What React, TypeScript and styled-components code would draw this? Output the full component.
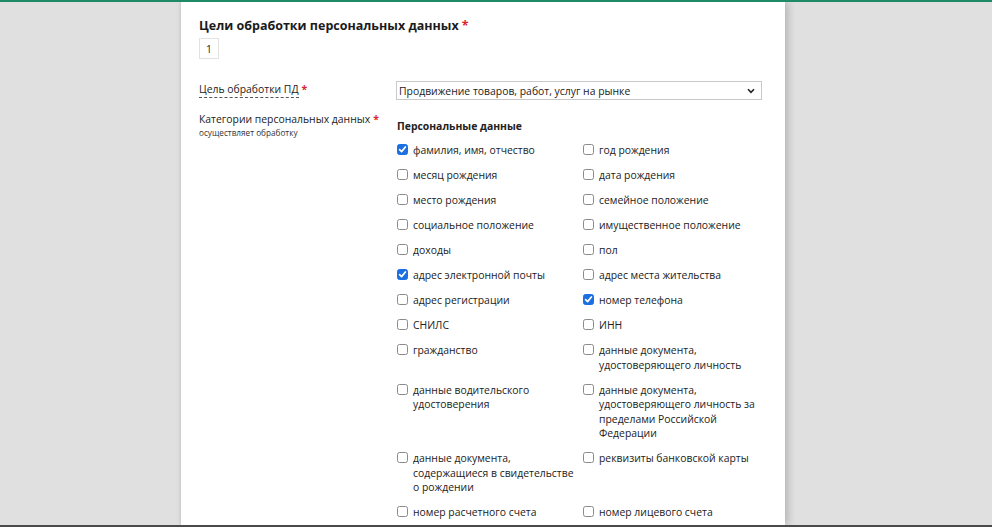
import React from "react";
import styled, { createGlobalStyle } from "styled-components";

const Global = createGlobalStyle`
  html, body { margin: 0; padding: 0; height: 100%; overflow: hidden; }
  body { background: #e0e0e0; font-family: "Open Sans", "Noto Sans", sans-serif; color: #222; }
  #root { height: 100%; }
`;

const Page = styled.div`
  height: 527px;
  display: flex;
  flex-direction: column;
  overflow: hidden;
  background: #e0e0e0;
`;

const TopLine = styled.div`
  height: 2px;
  flex: none;
  background: #1f8a68;
`;

const Stage = styled.div`
  flex: 1;
  min-height: 0;
  display: flex;
  padding-left: 181px;
  overflow: hidden;
`;

const Panel = styled.div`
  width: 604px;
  flex: none;
  background: #fff;
  box-shadow: 3px 0 8px rgba(0, 0, 0, 0.2), -1px 0 2px rgba(0, 0, 0, 0.06);
  padding: 14px 22px 0 18px;
  box-sizing: border-box;
`;

const BottomLine = styled.div`
  height: 2px;
  flex: none;
  background: #4a4a4a;
`;

const Title = styled.h2`
  margin: 0;
  font-size: 12.5px;
  font-weight: 700;
  line-height: 19px;
  color: #1b1b1b;
`;

const Req = styled.span`
  color: #d8262c;
  font-weight: 700;
  margin-left: 3px;
`;

const Counter = styled.div`
  margin-top: 3px;
  width: 20px;
  height: 21px;
  box-sizing: border-box;
  border: 1px solid #e2e2e2;
  font-size: 10.4px;
  display: flex;
  align-items: center;
  justify-content: center;
`;

const FieldRow = styled.div<{ $top: number }>`
  display: grid;
  grid-template-columns: 197px 366px;
  margin-top: ${(p) => p.$top}px;
  align-items: start;
`;

const LabelBox = styled.div`
  font-size: 10.4px;
  line-height: 15px;
  color: #222;
`;

const Dashed = styled.span`
  border-bottom: 1px dashed #555;
  padding-bottom: 1px;
`;

const Sub = styled.div`
  font-size: 8.2px;
  line-height: 11px;
  color: #333;
`;

const SelectBox = styled.div`
  height: 19px;
  box-sizing: border-box;
  border: 1px solid #c9c9c9;
  display: flex;
  align-items: center;
  justify-content: space-between;
  padding: 0 6px 0 2px;
  font-size: 10.4px;
  color: #1b1b1b;
`;

const Group = styled.div`
  padding-left: 1px;
`;

const GroupTitle = styled.div`
  font-size: 10.4px;
  font-weight: 700;
  line-height: 15px;
  margin-top: 7px;
`;

const Grid = styled.div`
  display: grid;
  grid-template-columns: 186px 180px;
  row-gap: 10.5px;
  margin-top: 9px;
`;

const Item = styled.label`
  display: flex;
  align-items: flex-start;
  gap: 5px;
  padding-right: 8px;
  font-size: 10.4px;
  line-height: 14.5px;
  color: #222;
`;

const Box = styled.span<{ $on: boolean }>`
  flex: none;
  width: 11px;
  height: 11px;
  margin-top: 1px;
  box-sizing: border-box;
  border-radius: 2.5px;
  border: 1px solid ${(p) => (p.$on ? "#1b6fe0" : "#8a8a8a")};
  background: ${(p) => (p.$on ? "#1b6fe0" : "#fff")};
  display: flex;
  align-items: center;
  justify-content: center;
`;

const Text = styled.span`
  flex: 1;
`;

const items: [string, boolean][] = [
  ["фамилия, имя, отчество", true],
  ["год рождения", false],
  ["месяц рождения", false],
  ["дата рождения", false],
  ["место рождения", false],
  ["семейное положение", false],
  ["социальное положение", false],
  ["имущественное положение", false],
  ["доходы", false],
  ["пол", false],
  ["адрес электронной почты", true],
  ["адрес места жительства", false],
  ["адрес регистрации", false],
  ["номер телефона", true],
  ["СНИЛС", false],
  ["ИНН", false],
  ["гражданство", false],
  ["данные документа, удостоверяющего личность", false],
  ["данные водительского удостоверения", false],
  ["данные документа, удостоверяющего личность за пределами Российской Федерации", false],
  ["данные документа, содержащиеся в свидетельстве о рождении", false],
  ["реквизиты банковской карты", false],
  ["номер расчетного счета", false],
  ["номер лицевого счета", false],
];

const Check = ({ on }: { on: boolean }) => (
  <Box $on={on}>
    {on && (
      <svg width="9" height="9" viewBox="0 0 9 9">
        <path d="M1.6 4.6 L3.6 6.6 L7.4 2" fill="none" stroke="#fff" strokeWidth="1.7" strokeLinecap="round" strokeLinejoin="round" />
      </svg>
    )}
  </Box>
);

export default function App() {
  return (
    <>
      <Global />
      <Page>
        <TopLine />
        <Stage>
          <Panel>
            <Title>
              Цели обработки персональных данных<Req>*</Req>
            </Title>
            <Counter>1</Counter>
            <FieldRow $top={22}>
              <LabelBox style={{ paddingTop: 1 }}>
                <Dashed>Цель обработки ПД</Dashed>
                <Req>*</Req>
              </LabelBox>
              <SelectBox>
                <span>Продвижение товаров, работ, услуг на рынке</span>
                <svg width="8" height="6" viewBox="0 0 8 6">
                  <path d="M1 1.2 L4 4.3 L7 1.2" fill="none" stroke="#222" strokeWidth="1.6" />
                </svg>
              </SelectBox>
            </FieldRow>
            <FieldRow $top={12}>
              <LabelBox>
                Категории персональных данных<Req>*</Req>
                <Sub>осуществляет обработку</Sub>
              </LabelBox>
              <Group>
                <GroupTitle>Персональные данные</GroupTitle>
                <Grid>
                  {items.map(([t, on]) => (
                    <Item key={t}>
                      <Check on={on} />
                      <Text>{t}</Text>
                    </Item>
                  ))}
                </Grid>
              </Group>
            </FieldRow>
          </Panel>
        </Stage>
        <BottomLine />
      </Page>
    </>
  );
}
